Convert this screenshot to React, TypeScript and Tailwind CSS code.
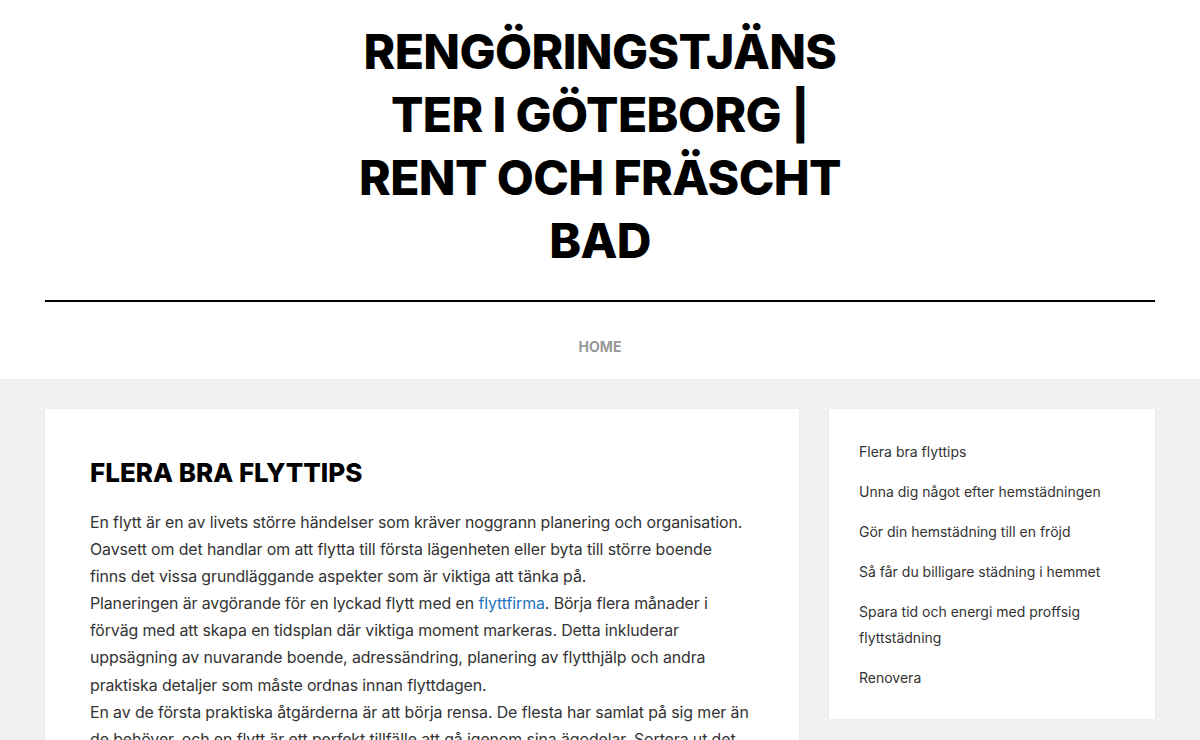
import React from "react";

const titleLines = ["RENGÖRINGSTJÄNS", "TER I GÖTEBORG |", "RENT OCH FRÄSCHT", "BAD"];

const sideLinks = [
  "Flera bra flyttips",
  "Unna dig något efter hemstädningen",
  "Gör din hemstädning till en fröjd",
  "Så får du billigare städning i hemmet",
  "Spara tid och energi med proffsig flyttstädning",
  "Renovera",
];

export default function App() {
  const body = { fontFamily: "Inter, 'Noto Sans', sans-serif" };
  return (
    <div className="min-h-[740px] bg-[#f1f1f1]" style={body}>
      <header className="bg-white">
        <div className="flex justify-center pt-[20px] pb-[28px]">
          <h1 className="text-center text-[48px] leading-[63px] font-extrabold text-black tracking-[-0.6px]">
            {titleLines.map((l) => (
              <span key={l} className="block whitespace-nowrap">{l}</span>
            ))}
          </h1>
        </div>
        <div className="mx-[45px] h-[2px] bg-black" />
        <nav className="flex justify-center h-[77px] items-center pt-[12px]">
          <a className="text-[14px] font-bold text-[#999]">HOME</a>
        </nav>
      </header>
      <main className="flex gap-[30px] px-[45px] pt-[30px]">
        <article className="w-[754px] bg-white px-[45px] pt-[48px] pb-[40px] shadow-[0_0_4px_rgba(0,0,0,0.04)]">
          <h2 className="text-[26px] leading-[32px] font-extrabold text-black">
            FLERA BRA FLYTTIPS
          </h2>
          <div className="mt-[20px] text-[15.9px] leading-[27.1px] text-[#333] tracking-[-0.1px] whitespace-nowrap">
            <p>
              En flytt är en av livets större händelser som kräver noggrann planering och organisation.
              <br />
              Oavsett om det handlar om att flytta till första lägenheten eller byta till större boende
              <br />
              finns det vissa grundläggande aspekter som är viktiga att tänka på.
            </p>
            <p>
              Planeringen är avgörande för en lyckad flytt med en{" "}
              <a className="text-[#1e73be]">flyttfirma</a>. Börja flera månader i
              <br />
              förväg med att skapa en tidsplan där viktiga moment markeras. Detta inkluderar
              <br />
              uppsägning av nuvarande boende, adressändring, planering av flytthjälp och andra
              <br />
              praktiska detaljer som måste ordnas innan flyttdagen.
            </p>
            <p>
              En av de första praktiska åtgärderna är att börja rensa. De flesta har samlat på sig mer än
              <br />
              de behöver, och en flytt är ett perfekt tillfälle att gå igenom sina ägodelar. Sortera ut det
              <br />
              som inte längre behövs och sälj, skänk eller släng det.
            </p>
          </div>
        </article>
        <aside className="w-[326px] self-start bg-white px-[30px] pt-[30px] pb-[28px] shadow-[0_0_4px_rgba(0,0,0,0.04)]">
          <ul className="flex flex-col gap-[14px] text-[14px] leading-[26px] text-[#333]">
            {sideLinks.map((s) => (
              <li key={s}>
                <a>{s}</a>
              </li>
            ))}
          </ul>
        </aside>
      </main>
    </div>
  );
}
